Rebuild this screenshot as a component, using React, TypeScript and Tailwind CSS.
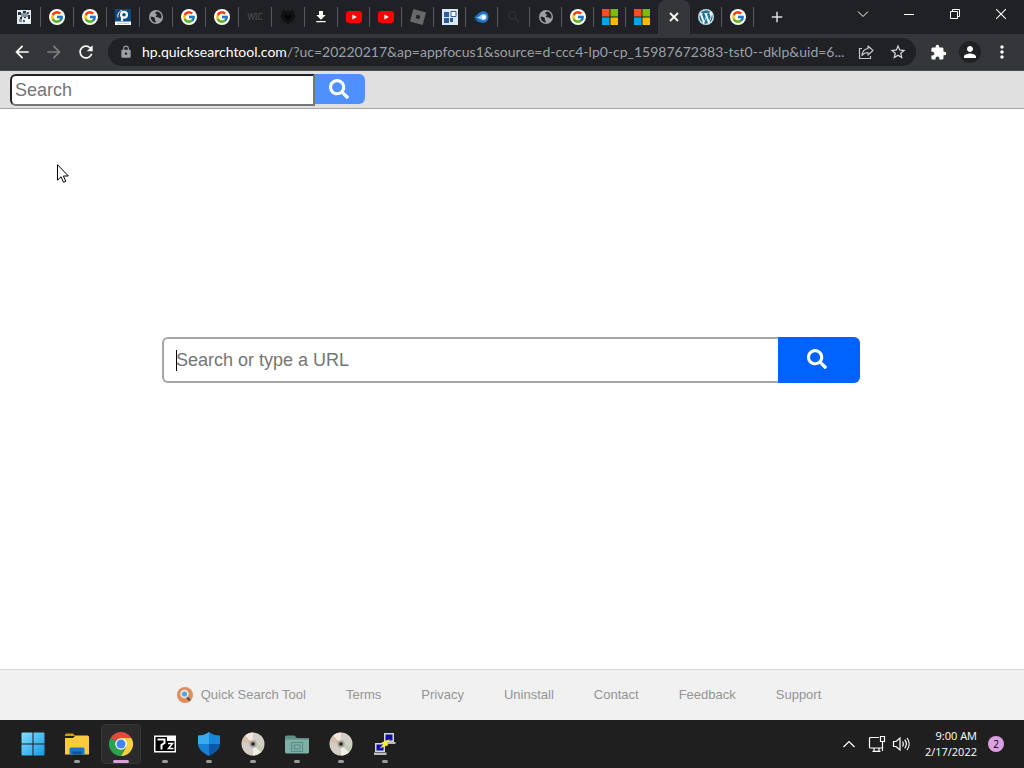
import type { ReactNode } from "react";
import { clsx } from "clsx";
import { FcGoogle } from "react-icons/fc";
import { FaSearch, FaWordpress } from "react-icons/fa";
import { SiRoblox } from "react-icons/si";
import {
  MdAdd,
  MdArrowBack,
  MdArrowForward,
  MdExtension,
  MdFileDownload,
  MdLock,
  MdMoreVert,
  MdPerson,
  MdRefresh,
  MdSearch,
  MdStarBorder,
} from "react-icons/md";

/* ── Favicons ──────────────────────────────────────────── */

function Google() {
  return (
    <span className="flex h-4 w-4 items-center justify-center rounded-full bg-white">
      <FcGoogle className="h-3.5 w-3.5" />
    </span>
  );
}

function Youtube() {
  return (
    <svg viewBox="0 0 16 16" className="h-4 w-4">
      <rect y="2" width="16" height="12" rx="3" fill="#f00" />
      <path d="M6.4 5.4v5.2L10.8 8z" fill="#fff" />
    </svg>
  );
}

function Microsoft() {
  return (
    <svg viewBox="0 0 16 16" className="h-4 w-4">
      <path d="M0 0h7.5v7.5H0z" fill="#f25022" />
      <path d="M8.5 0H16v7.5H8.5z" fill="#7fba00" />
      <path d="M0 8.5h7.5V16H0z" fill="#00a4ef" />
      <path d="M8.5 8.5H16V16H8.5z" fill="#ffb900" />
    </svg>
  );
}

function Globe() {
  return (
    <svg viewBox="0 0 16 16" className="h-4 w-4">
      <circle cx="8" cy="8" r="7" fill="#9aa0a6" />
      <path
        d="M2.6 7.6c2 .2 3.4.4 4.1 1.5.5.8-.1 1.4.3 2.1.3.6 1 .7.9 2.4C4.9 13.6 2.600 11 2.600 7.600zM8.700 2.500c-1 .6-1.600 1.200-1.300 1.900.3.8 1.500.5 1.600 1.400.1.900-1.500 1-1.200 2 .3.900 1.600.4 2.600.6.9.2 1 .9 1.800 1 .6.1 1-.3 1.300-.8.500-3.300-1.700-5.800-4.800-6.100z"
        fill="#202124"
      />
    </svg>
  );
}

function Pixels() {
  return (
    <svg viewBox="0 0 14 14" className="h-3.5 w-3.5">
      <path d="M0 0h14v14H0z" fill="#e4eaee" />
      <path d="M1 2h3v3H1zM6 1h3v2H6zM11 5h2v4h-2zM3 7h2v2H3zM7 6h2v2H7z" fill="#25313a" />
      <path d="M4 3h4v4H4zM8 3h3v4H8zM2 9h3v3H2z" fill="#7f97a5" />
      <path d="M8 9h5v4H8z" fill="#fff" />
      <path d="M6 10h2v2H6zM10 2h2v2h-2z" fill="#4a5c68" />
    </svg>
  );
}

function BlueP() {
  return (
    <svg viewBox="0 0 16 16" className="h-4 w-4">
      <path d="M0 0h16v16H0z" fill="#fff" />
      <path d="M0 0h16v12.500H0z" fill="#0c4a86" />
      <path d="M7 12V8" stroke="#fff" strokeWidth="2.200" />
      <circle cx="9" cy="5.800" r="2.900" fill="none" stroke="#fff" strokeWidth="2.200" />
      <path d="M3 8.500C2.200 5 4.500 2 7 1.400" fill="none" stroke="#fff" />
      <path d="M2 14.300h12" stroke="#9fb7cf" strokeWidth=".8" />
    </svg>
  );
}

function Heart() {
  return (
    <svg viewBox="0 0 16 16" className="h-4 w-4">
      <path d="M8 1l2 1 3-.4L14 4l1.500 3-1.500 3-2 3-4 2-4-2-2-3L.500 7 2 4l1-2.400L6 2z" fill="#111214" />
      <path d="M8 11.500L4.500 8V5.500L8 7l3.500-1.500V8z" fill="#050505" />
    </svg>
  );
}

function Tiles() {
  return (
    <svg viewBox="0 0 16 16" className="h-4 w-4">
      <path d="M0 0h16v16H0z" fill="#dce9f7" />
      <path d="M2 3h5v5H2zM2 9h5v5H2zM8 9h3v4H8z" fill="#2b5c9e" />
      <path d="M9 2.500h5v5H9z" fill="#fff" stroke="#2b5c9e" />
    </svg>
  );
}

function Comet() {
  return (
    <svg viewBox="0 0 16 16" className="h-4 w-4">
      <path d="M0 8.500C3 6.500 5 2.500 9.500 2.300a5.800 5.800 0 0 1 0 11.500C6 14 4.500 12.500 2 12l1.500-1L0 10l2.500-.7z" fill="#1d75c9" />
      <path d="M2.500 8.500C6 8 6.500 5 9.500 5a3 3 0 0 1 0 6.200c-2 0-3-1.500-7-2.700z" fill="#a9d5f8" />
      <circle cx="9.800" cy="8.100" r="1.900" fill="#fff" />
    </svg>
  );
}

function TabClose() {
  return (
    <svg viewBox="0 0 10 10" className="h-2.5 w-2.5">
      <path d="M1 1l8 8M9 1L1 9" stroke="#fff" strokeWidth="1.800" />
    </svg>
  );
}

type Tab = { title: string; icon: ReactNode; wide?: boolean; line?: boolean; active?: boolean };

const TABS: Tab[] = [
  { title: "Pixels", icon: <Pixels />, wide: true, line: true },
  { title: "Google", icon: <Google />, wide: true, line: true },
  { title: "Google", icon: <Google />, wide: true, line: true },
  { title: "P", icon: <BlueP />, wide: true, line: true },
  { title: "Website", icon: <Globe />, wide: true, line: true },
  { title: "Google", icon: <Google />, wide: true, line: true },
  { title: "Google", icon: <Google />, wide: true, line: true },
  { title: "Wic", icon: <span className="text-[8px] text-[#505154]">WIC</span>, wide: true, line: true },
  { title: "Heart", icon: <Heart />, wide: true, line: true },
  { title: "Download", icon: <MdFileDownload className="h-4 w-4 text-white" />, wide: true, line: true },
  { title: "YouTube", icon: <Youtube />, line: true },
  { title: "YouTube", icon: <Youtube />, line: true },
  { title: "Roblox", icon: <SiRoblox className="h-4 w-4 text-[#66686a]" />, line: true },
  { title: "Tiles", icon: <Tiles />, line: true },
  { title: "Comet", icon: <Comet />, line: true },
  { title: "Search", icon: <MdSearch className="h-4 w-4 text-[#303134]" />, line: true },
  { title: "Website", icon: <Globe />, line: true },
  { title: "Google", icon: <Google />, line: true },
  { title: "Microsoft", icon: <Microsoft />, line: true },
  { title: "Microsoft", icon: <Microsoft /> },
  { title: "Close tab", icon: <TabClose />, active: true },
  {
    title: "WordPress",
    icon: (
      <span className="flex h-4 w-4 items-center justify-center rounded-full bg-white">
        <FaWordpress className="h-4 w-4 text-[#21759b]" />
      </span>
    ),
    line: true,
  },
  { title: "Google", icon: <Google />, line: true },
];

function TabStrip() {
  return (
    <div className="flex h-[34px] bg-[#202124] pl-2">
      <div className="flex" role="tablist">
        {TABS.map((tab, i) => (
          <button
            key={i}
            role="tab"
            aria-label={tab.title}
            aria-selected={!!tab.active}
            className={clsx(
              "flex shrink-0 items-center",
              tab.wide ? "w-[33px]" : "w-8",
              tab.active && "rounded-t-lg bg-[#35363a]"
            )}
          >
            <span className="flex flex-1 justify-center">{tab.icon}</span>
            <span className={clsx("h-5 w-px", tab.line && "bg-[#55575b]")} />
          </button>
        ))}
      </div>
      <button aria-label="New tab" className="flex w-[46px] items-center justify-center">
        <MdAdd className="h-[18px] w-[18px] text-[#dadce0]" />
      </button>
      <div className="ml-auto flex h-7 text-white">
        <button aria-label="Search tabs" className="flex w-[46px] items-center justify-center">
          <svg viewBox="0 0 12 12" className="h-3 w-3" fill="none" stroke="currentColor">
            <path d="M1 3.500l5 5 5-5" />
          </svg>
        </button>
        <button aria-label="Minimize" className="flex w-[46px] items-center justify-center">
          <svg viewBox="0 0 10 10" className="h-2.5 w-2.5" stroke="currentColor">
            <path d="M0 5.500h10" />
          </svg>
        </button>
        <button aria-label="Restore" className="flex w-[46px] items-center justify-center">
          <svg viewBox="0 0 10 10" className="h-2.5 w-2.5" fill="none" stroke="currentColor">
            <path d="M.500 2.500h7v7h-7zM2.500 2.500v-2h7v7h-2" />
          </svg>
        </button>
        <button aria-label="Close" className="flex w-[46px] items-center justify-center">
          <svg viewBox="0 0 10 10" className="h-2.5 w-2.5" fill="none" stroke="currentColor" strokeWidth="1.1">
            <path d="M0 0l10 10M10 0L0 10" />
          </svg>
        </button>
      </div>
    </div>
  );
}

function ToolButton({ label, children }: { label: string; children: ReactNode }) {
  return (
    <button aria-label={label} className="flex h-7 w-8 shrink-0 items-center justify-center">
      {children}
    </button>
  );
}

function Toolbar() {
  return (
    <div className="flex h-[37px] items-center border-b border-[#4a4b4e] bg-[#35363a] px-1.5 text-white">
      <ToolButton label="Back">
        <MdArrowBack className="h-5 w-5" />
      </ToolButton>
      <ToolButton label="Forward">
        <MdArrowForward className="h-5 w-5 text-[#7d7e81]" />
      </ToolButton>
      <ToolButton label="Reload">
        <MdRefresh className="h-5 w-5" />
      </ToolButton>
      <div className="mx-1.5 flex h-7 min-w-0 flex-1 items-center rounded-full bg-[#202124] pr-0.5 pl-[11px]">
        <MdLock className="h-3.5 w-3.5 shrink-0 text-[#9aa0a6]" />
        <p className="ml-[9px] min-w-0 flex-1 truncate font-[Lato,sans-serif] text-sm text-[#9aa0a6]">
          <span className="text-white">hp.quicksearchtool.com</span>
          /?uc=20220217&amp;ap=appfocus1&amp;source=d-ccc4-lp0-cp_15987672383-tst0--dklp&amp;uid=6...
        </p>
        <ToolButton label="Share">
          <svg viewBox="0 0 16 16" className="h-4 w-4" fill="none" stroke="#c4c7ca" strokeWidth="1.200">
            <path d="M4 4.500H1.500v10h11V12" />
            <path d="M10 2l5 4.500-5 4.500V8.500c-3 0-4.500 1-6 3 .3-4 2.500-6.500 6-7z" strokeLinejoin="round" />
          </svg>
        </ToolButton>
        <ToolButton label="Bookmark this tab">
          <MdStarBorder className="h-[18px] w-[18px] text-[#dadce0]" />
        </ToolButton>
      </div>
      <ToolButton label="Extensions">
        <MdExtension className="h-[17px] w-[17px]" />
      </ToolButton>
      <ToolButton label="Profile">
        <span className="flex h-[22px] w-[22px] items-center justify-center rounded-full bg-[#202124]">
          <MdPerson className="h-[18px] w-[18px]" />
        </span>
      </ToolButton>
      <ToolButton label="Menu">
        <MdMoreVert className="h-5 w-5" />
      </ToolButton>
    </div>
  );
}

/* ── Page ──────────────────────────────────────────────── */

const LINKS = ["Terms", "Privacy", "Uninstall", "Contact", "Feedback", "Support"];

function SearchPage() {
  return (
    <div className="flex flex-1 flex-col bg-white font-['Liberation_Sans',Arial,sans-serif]">
      <header className="border-b border-[#a6a6a6] bg-[#e0e0e0] px-2.5 pt-[3px] pb-0.5">
        <form className="flex items-start">
          <input
            type="text"
            aria-label="Search"
            placeholder="Search"
            className="h-8 w-[305px] rounded-l-md border-2 border-t-[#202124] border-r-[#767676] border-b-[#767676] border-l-[#202124] bg-white px-[3px] text-lg placeholder:text-[#757575] focus:outline-none"
          />
          <button
            type="button"
            aria-label="Go"
            className="flex h-[30px] w-[50px] items-center justify-center rounded-r-md bg-[#4d90fe] pr-0.5 text-white"
          >
            <FaSearch className="h-5 w-5" />
          </button>
        </form>
      </header>

      <main className="flex flex-1 justify-center px-40 pt-[228px]">
        <form className="mr-1 ml-0.5 flex h-[46px] flex-1">
          <div className="flex min-w-0 flex-1 items-center rounded-l-md border-2 border-r-0 border-[#a6a6a6] pl-3">
            <span className="h-[21px] w-px bg-black" />
            <input
              type="text"
              aria-label="Search or type a URL"
              placeholder="Search or type a URL"
              className="-ml-px h-full min-w-0 flex-1 bg-transparent text-lg placeholder:text-[#757575] focus:outline-none"
            />
          </div>
          <button
            type="button"
            aria-label="Search"
            className="flex w-[82px] items-center justify-center rounded-r-md bg-[#0062ff] pr-1 pb-0.5 text-white"
          >
            <FaSearch className="h-5 w-5" />
          </button>
        </form>
      </main>

      <footer className="flex h-[51px] items-center justify-center gap-10 border-t border-[#dcdcdc] bg-[#f1f1f1] pr-[26px] text-[13px] text-[#949494]">
        <a href="#home" className="flex items-center gap-2">
          <svg viewBox="0 0 16 16" className="h-4 w-4">
            <circle cx="8" cy="8" r="8" fill="#e08e5c" />
            <path d="M9 9.500l4 4" stroke="#4b4a52" strokeWidth="1.800" />
            <circle cx="7.500" cy="7" r="4.200" fill="#e7ecef" />
            <circle cx="7.500" cy="7" r="2.600" fill="#5aa6d2" />
          </svg>
          Quick Search Tool
        </a>
        {LINKS.map((link) => (
          <a key={link} href={`#${link.toLowerCase()}`}>
            {link}
          </a>
        ))}
      </footer>
    </div>
  );
}

/* ── Taskbar ───────────────────────────────────────────── */

function WindowsLogo() {
  return (
    <svg viewBox="0 0 24 24" className="h-6 w-6">
      <defs>
        <linearGradient id="win" x1="0" y1="0" x2="1" y2="1">
          <stop offset="0" stopColor="#7fe0ff" />
          <stop offset="1" stopColor="#1499e8" />
        </linearGradient>
      </defs>
      <path
        d="M1.500.500h10v11h-11v-10a1 1 0 0 1 1-1zM12.500.500h10a1 1 0 0 1 1 1v10h-11zM.500 12.500h11v11h-10a1 1 0 0 1-1-1zM12.500 12.500h11v10a1 1 0 0 1-1 1h-10z"
        fill="url(#win)"
      />
    </svg>
  );
}

function Folder() {
  return (
    <svg viewBox="0 0 24 24" className="h-6 w-6">
      <path d="M0 3a1.500 1.500 0 0 1 1.500-1.500H8L10.500 4H0z" fill="#d9980f" />
      <path d="M0 6h8l2.500-2.500h12A1.500 1.500 0 0 1 24 5v17.500H0z" fill="#fccb3d" />
      <path d="M4.500 22.500V17A1.500 1.500 0 0 1 6 15.500h12a1.500 1.500 0 0 1 1.500 1.500v5.500z" fill="#1679c7" />
      <path d="M7.500 22.500v-3h9v3z" fill="#0b549b" />
    </svg>
  );
}

function Chrome() {
  return (
    <svg viewBox="0 0 24 24" className="h-6 w-6">
      <path d="M12 12L1.600 6a12 12 0 0 1 20.800 0z" fill="#e24a3b" />
      <path d="M12 12L1.600 6A12 12 0 0 0 12 24l5-9z" fill="#2ea14f" />
      <path d="M12 6h10.400A12 12 0 0 1 12 24l5.200-9z" fill="#fcd03c" />
      <circle cx="12" cy="12" r="5.800" fill="#fff" />
      <circle cx="12" cy="12" r="4.500" fill="#4285f4" />
    </svg>
  );
}

function SevenZip() {
  return (
    <svg viewBox="0 0 24 24" className="h-6 w-6">
      <path d="M1 3.500h22v17H1z" fill="#fff" />
      <path d="M2.500 5h11.500v14H2.500zM14 9h7.500v10H14z" fill="#000" />
      <path d="M4.500 7.500h7v3.500L8.500 13v4.500" fill="none" stroke="#fff" strokeWidth="2" />
      <path d="M15 11.500h4.500l-4 5H20.500" fill="none" stroke="#fff" strokeWidth="1.500" />
    </svg>
  );
}

function Shield() {
  return (
    <svg viewBox="0 0 24 24" className="h-6 w-6">
      <path d="M12 0c3 2.500 7 3.500 11 3.500V12H12z" fill="#1789dc" />
      <path d="M12 0C9 2.500 5 3.500 1 3.500V12h11z" fill="#3cabee" />
      <path d="M1 12h11v12C5 20.500 1 16.500 1 12z" fill="#1580d4" />
      <path d="M23 12H12v12c7-3.500 11-7.500 11-12z" fill="#0b58a9" />
    </svg>
  );
}

function Disc() {
  return (
    <svg viewBox="0 0 24 24" className="h-6 w-6">
      <circle cx="12" cy="12" r="11.500" fill="#d3cec6" />
      <path d="M12 12L4 3.700A11.500 11.500 0 0 1 12 .5z" fill="#f3e4da" />
      <path d="M12 12l8 8.300A11.500 11.500 0 0 1 12 23.500z" fill="#f1eee7" />
      <path d="M12 12L.8 10A11.500 11.500 0 0 1 4 3.700z" fill="#d8bda8" />
      <path d="M12 12l11.200 2a11.500 11.500 0 0 1-3.200 6.300z" fill="#c1cfb6" />
      <circle cx="12" cy="12" r="3.800" fill="#a8a49e" />
      <circle cx="12" cy="12" r="1.800" fill="#222" />
    </svg>
  );
}

function TealFolder() {
  return (
    <svg viewBox="0 0 24 24" className="h-6 w-6">
      <path d="M0 5a1.500 1.500 0 0 1 1.500-1.500h8L12 6h12v4H0z" fill="#5d8f87" />
      <path d="M0 7.500h24V20a1.500 1.500 0 0 1-1.500 1.500h-21A1.500 1.500 0 0 1 0 20z" fill="#7fb0a6" />
      <path d="M6.500 10.500h11v9h-11zM9 13h6v4H9z" fill="none" stroke="#568a82" />
    </svg>
  );
}

function Putty() {
  return (
    <svg viewBox="0 0 24 24" className="h-6 w-6">
      <path d="M11 1h10v9H11zM2 11h10v9H2z" fill="#d4d4d4" />
      <path d="M12.500 2.500h7v6h-7zM3.500 12.500h7v6h-7z" fill="#0d0da8" />
      <path d="M12 10h10.500v2H12zM1 20.500h12.500v2.500H1z" fill="#bcbcbc" />
      <path d="M17.500 7L8.500 10.500l2 1.500-4 4.500 9-3.500-2-1.800z" fill="#f5f51a" />
    </svg>
  );
}

const APPS = [
  { name: "Start", icon: <WindowsLogo />, mark: "" },
  { name: "File Explorer", icon: <Folder />, mark: "w-1.5 bg-[#9b9b9b]" },
  { name: "Chrome", icon: <Chrome />, mark: "w-4 bg-[#d9a0dc]", active: true },
  { name: "7-Zip", icon: <SevenZip />, mark: "w-1.5 bg-[#9b9b9b]" },
  { name: "Security", icon: <Shield />, mark: "w-1.5 bg-[#9b9b9b]" },
  { name: "Disc", icon: <Disc />, mark: "w-1.5 bg-[#9b9b9b]" },
  { name: "Folder", icon: <TealFolder />, mark: "w-1.5 bg-[#9b9b9b]" },
  { name: "Disc", icon: <Disc />, mark: "w-1.5 bg-[#9b9b9b]" },
  { name: "PuTTY", icon: <Putty />, mark: "w-1.5 bg-[#9b9b9b]" },
];

function Taskbar() {
  return (
    <div className="flex h-12 items-center bg-[#1f1f1f] pr-2.5 pl-[11px] font-['Open_Sans',sans-serif] text-white">
      {APPS.map((app, i) => (
        <button key={i} aria-label={app.name} className="flex h-10 w-11 shrink-0 justify-center">
          <span
            className={clsx(
              "flex h-10 w-10 flex-col items-center rounded border pt-[7px]",
              app.active ? "border-[#353535] bg-[#2b2b2b]" : "border-transparent"
            )}
          >
            {app.icon}
            <span className={clsx("mt-1 h-[3px] rounded-full", app.mark)} />
          </span>
        </button>
      ))}
      <div className="ml-auto flex items-center">
        <button aria-label="Show hidden icons" className="flex w-7 justify-center">
          <svg viewBox="0 0 14 14" className="h-3.5 w-3.5" fill="none" stroke="currentColor" strokeWidth="1.200">
            <path d="M1.500 10L7 4.500l5.500 5.500" />
          </svg>
        </button>
        <button aria-label="Network" className="flex w-7 justify-center">
          <svg viewBox="0 0 18 18" className="h-[18px] w-[18px]" fill="none" stroke="currentColor" strokeWidth="1.200">
            <path d="M11 2.500H2.500a1 1 0 0 0-1 1V12a1 1 0 0 0 1 1h12V8.500M6 13v3M11 13v3M4.500 16.400h8M12.500 1.500h4v5h-4zM14.500 6.500V16" />
          </svg>
        </button>
        <button aria-label="Volume" className="flex w-5 justify-center">
          <svg viewBox="0 0 18 18" className="h-[18px] w-[18px]" fill="none" stroke="currentColor" strokeWidth="1.200">
            <path d="M1.500 6.500H4L8 3v12l-4-3.500H1.500zM10.500 6.500c1 1.500 1 3.500 0 5M12.700 4.700c2 2.600 2 6 0 8.600M15 3c2.800 3.600 2.800 8.400 0 12" />
          </svg>
        </button>
        <div className="ml-3.5 text-right text-[11px] leading-4">
          <p>9:00 AM</p>
          <p>2/17/2022</p>
        </div>
        <button
          aria-label="2 notifications"
          className="mr-2.5 ml-[11px] flex h-4 w-4 items-center justify-center rounded-full bg-[#dc9fe0] text-[10px] text-black"
        >
          2
        </button>
      </div>
    </div>
  );
}

function Cursor() {
  return (
    <svg viewBox="0 0 12 19" className="pointer-events-none absolute top-[164px] left-[57px] h-[19px] w-3">
      <path d="M.500.700v15.500l3.600-3.400 2.400 5.500 2.300-1-2.400-5.300h5z" fill="#fff" stroke="#000" />
    </svg>
  );
}

export default function App() {
  return (
    <div className="relative flex min-h-screen flex-col">
      <TabStrip />
      <Toolbar />
      <SearchPage />
      <Taskbar />
      <Cursor />
    </div>
  );
}
